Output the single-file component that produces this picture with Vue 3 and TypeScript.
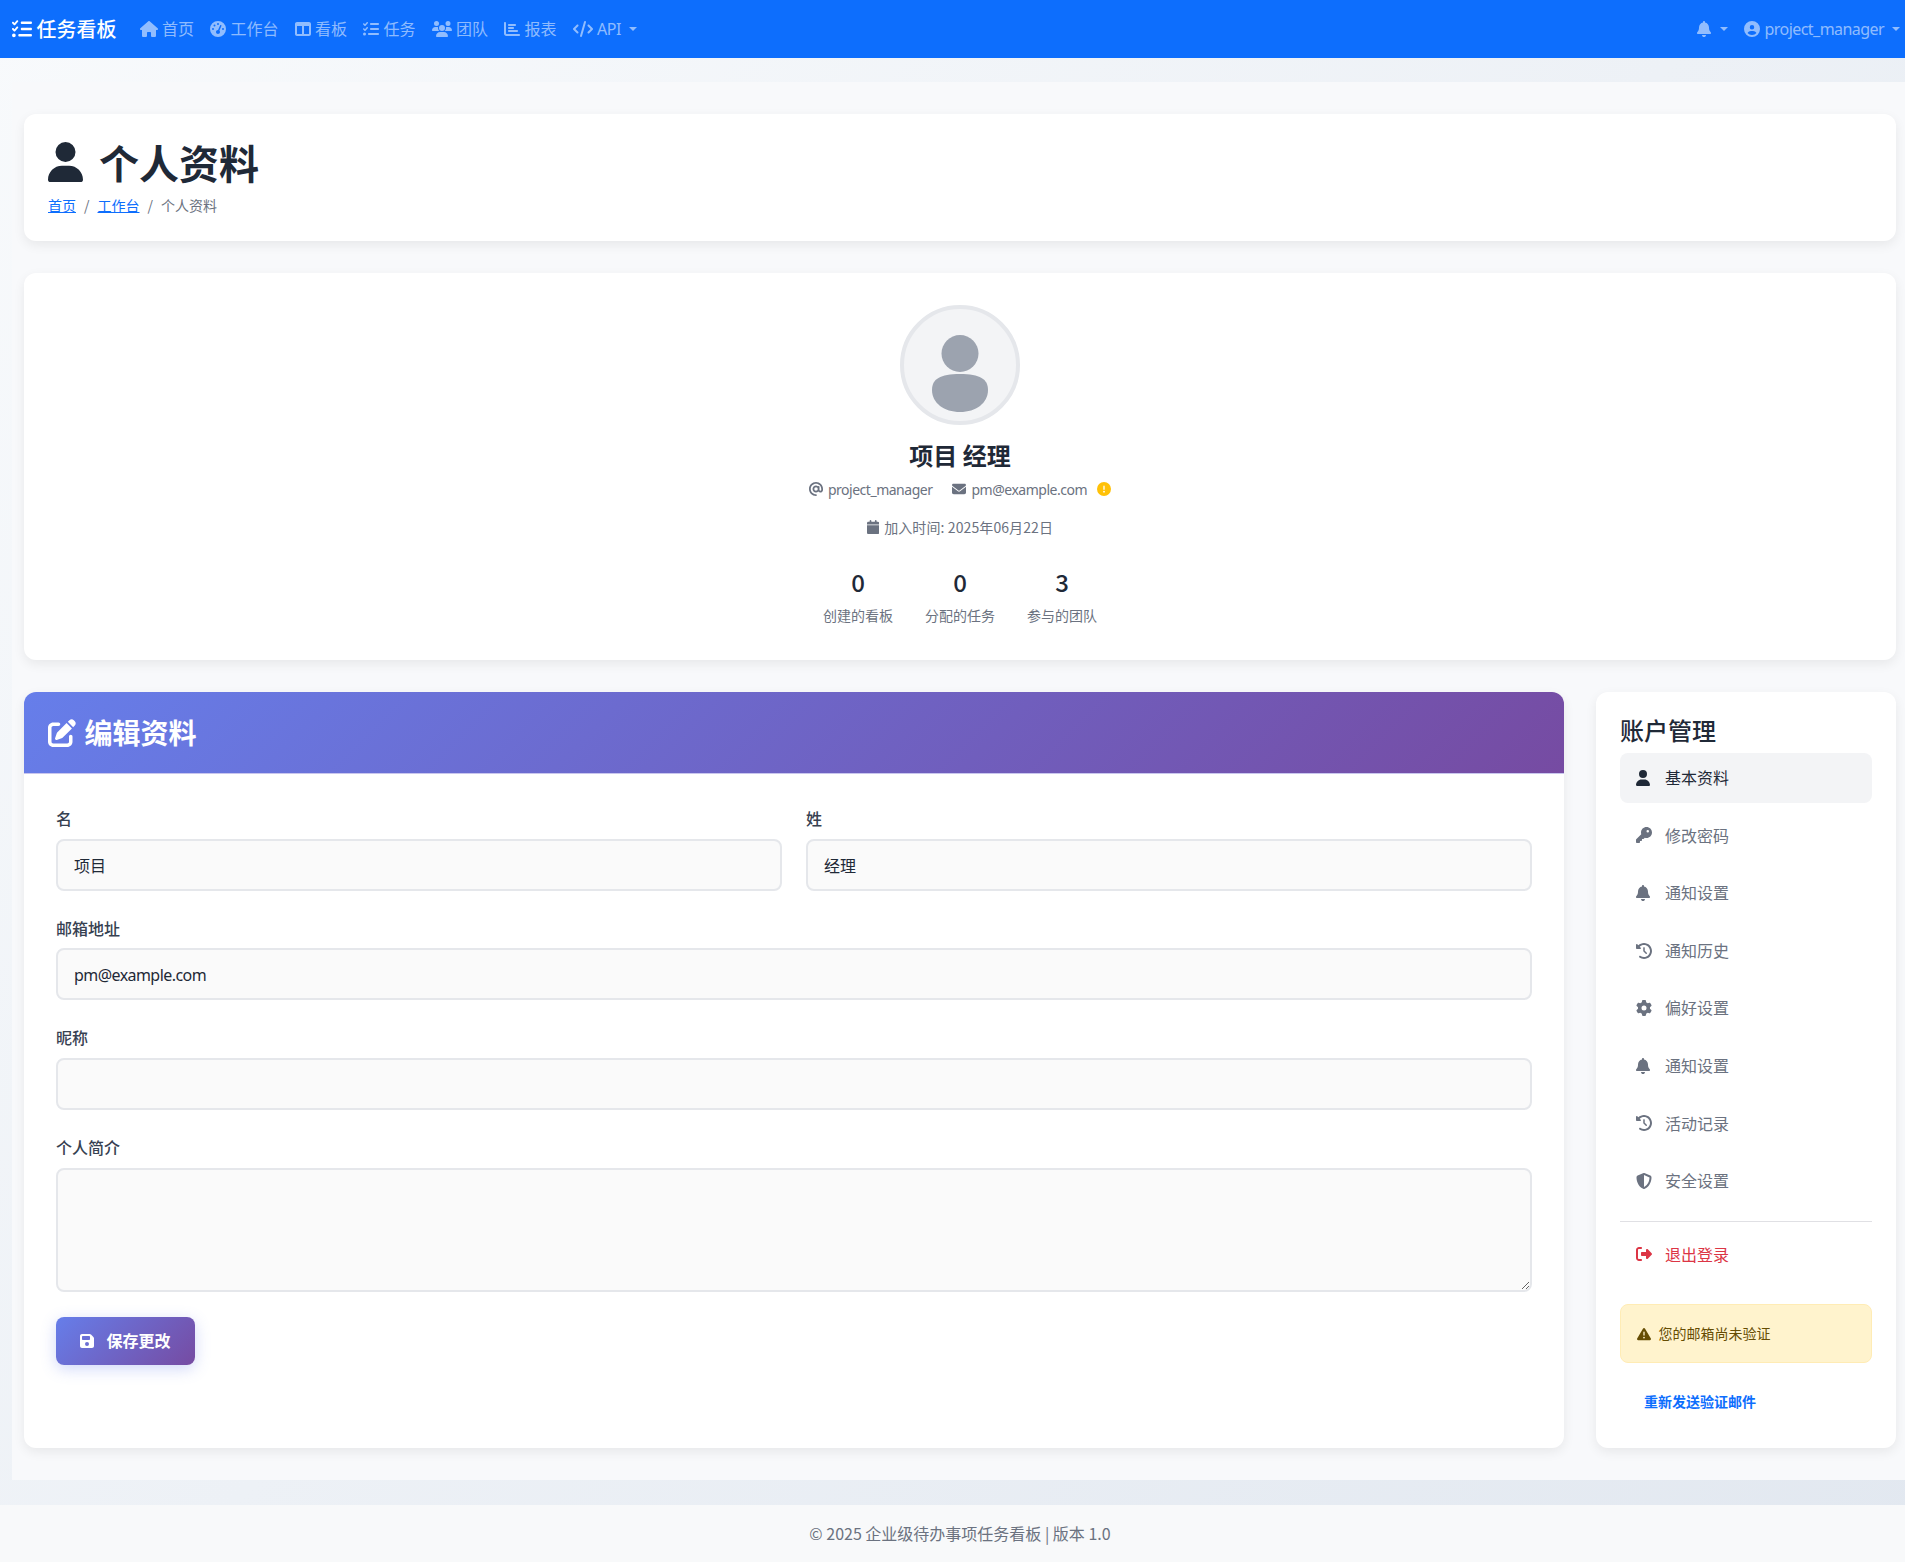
<script setup lang="ts">
import { h } from 'vue';

type IconDef = [number, string];

// font-awesome 6 solid paths, [viewBox width, path]
const icons: Record<string, IconDef> = {
  house: [576, 'M575.8 255.5c0 18-15 32.1-32 32.1h-32l.7 160.2c0 2.7-.2 5.4-.5 8.1V472c0 22.1-17.9 40-40 40H456c-1.1 0-2.2 0-3.3-.1c-1.4 .1-2.8 .1-4.2 .1H416 392c-22.1 0-40-17.9-40-40V448 384c0-17.7-14.3-32-32-32H256c-17.7 0-32 14.3-32 32v64 24c0 22.1-17.9 40-40 40H160 128.1c-1.5 0-3-.1-4.5-.2c-1.2 .1-2.4 .2-3.6 .2H104c-22.1 0-40-17.9-40-40V360c0-.9 0-1.9 .1-2.8V287.6H32c-18 0-32-14-32-32.1c0-9 3-17 10-24L266.4 8c7-7 15-8 22-8s15 2 21 7L564.8 231.5c8 7 12 15 11 24z'],
  gauge: [512, 'M0 256a256 256 0 1 1 512 0A256 256 0 1 1 0 256zM288 96a32 32 0 1 0 -64 0 32 32 0 1 0 64 0zM256 416c35.3 0 64-28.7 64-64c0-17.4-6.9-33.1-18.1-44.6L366 161.7c5.3-12.1-.2-26.3-12.3-31.6s-26.3 .2-31.6 12.3L257.9 288c-.6 0-1.3 0-1.9 0c-35.3 0-64 28.7-64 64s28.7 64 64 64zM176 144a32 32 0 1 0 -64 0 32 32 0 1 0 64 0zM96 288a32 32 0 1 0 0-64 32 32 0 1 0 0 64zm352-32a32 32 0 1 0 -64 0 32 32 0 1 0 64 0z'],
  columns: [512, 'M0 96C0 60.7 28.7 32 64 32H448c35.3 0 64 28.7 64 64V416c0 35.3-28.7 64-64 64H64c-35.3 0-64-28.7-64-64V96zm64 64V416H224V160H64zm384 0H288V416H448V160z'],
  tasks: [512, 'M152.1 38.2c9.9 8.9 10.7 24 1.8 33.9l-72 80c-4.4 4.9-10.6 7.8-17.2 7.9s-12.9-2.4-17.6-7L7 113C-2.3 103.6-2.3 88.4 7 79s24.6-9.4 33.9 0l22.1 22.1 55.1-61.2c8.9-9.9 24-10.7 33.9-1.8zm0 160c9.9 8.9 10.7 24 1.8 33.9l-72 80c-4.4 4.9-10.6 7.8-17.2 7.9s-12.9-2.4-17.6-7L7 273c-9.4-9.4-9.4-24.6 0-33.9s24.6-9.4 33.9 0l22.1 22.1 55.1-61.2c8.9-9.9 24-10.7 33.9-1.8zM224 96c0-17.7 14.3-32 32-32H480c17.7 0 32 14.3 32 32s-14.3 32-32 32H256c-17.7 0-32-14.3-32-32zm0 160c0-17.7 14.3-32 32-32H480c17.7 0 32 14.3 32 32s-14.3 32-32 32H256c-17.7 0-32-14.3-32-32zM160 416c0-17.7 14.3-32 32-32H480c17.7 0 32 14.3 32 32s-14.3 32-32 32H192c-17.7 0-32-14.3-32-32zM48 368a48 48 0 1 1 0 96 48 48 0 1 1 0-96z'],
  users: [640, 'M144 0a80 80 0 1 1 0 160A80 80 0 1 1 144 0zM512 0a80 80 0 1 1 0 160A80 80 0 1 1 512 0zM0 298.7C0 239.8 47.8 192 106.7 192h42.7c15.9 0 31 3.5 44.6 9.7c-1.3 7.2-1.9 14.7-1.9 22.3c0 38.2 16.8 72.5 43.3 96c-.2 0-.4 0-.7 0H21.3C9.6 320 0 310.4 0 298.7zM405.3 320c-.2 0-.4 0-.7 0c26.6-23.5 43.3-57.8 43.3-96c0-7.6-.7-15-1.9-22.3c13.6-6.3 28.7-9.7 44.6-9.7h42.7C592.2 192 640 239.8 640 298.7c0 11.8-9.6 21.3-21.3 21.3H405.3zM224 224a96 96 0 1 1 192 0 96 96 0 1 1 -192 0zM128 485.3C128 411.7 187.7 352 261.3 352H378.7C452.3 352 512 411.7 512 485.3c0 14.7-11.9 26.7-26.7 26.7H154.7c-14.7 0-26.7-11.9-26.7-26.7z'],
  chart: [512, 'M32 32c17.7 0 32 14.3 32 32V400c0 8.8 7.2 16 16 16H480c17.7 0 32 14.3 32 32s-14.3 32-32 32H80c-44.2 0-80-35.8-80-80V64C0 46.3 14.3 32 32 32zm96 96c0-17.7 14.3-32 32-32l192 0c17.7 0 32 14.3 32 32s-14.3 32-32 32l-192 0c-17.7 0-32-14.3-32-32zm32 64H288c17.7 0 32 14.3 32 32s-14.3 32-32 32H160c-17.7 0-32-14.3-32-32s14.3-32 32-32zm0 96H416c17.7 0 32 14.3 32 32s-14.3 32-32 32H160c-17.7 0-32-14.3-32-32s14.3-32 32-32z'],
  code: [640, 'M392.8 1.2c-17-4.9-34.7 5-39.6 22l-128 448c-4.9 17 5 34.7 22 39.6s34.7-5 39.6-22l128-448c4.9-17-5-34.7-22-39.6zm80.6 120.1c-12.5 12.5-12.5 32.8 0 45.3L562.7 256l-89.4 89.4c-12.5 12.5-12.5 32.8 0 45.3s32.8 12.5 45.3 0l112-112c12.5-12.5 12.5-32.8 0-45.3l-112-112c-12.5-12.5-32.8-12.5-45.3 0zm-306.7 0c-12.5-12.5-32.8-12.5-45.3 0l-112 112c-12.5 12.5-12.5 32.8 0 45.3l112 112c12.5 12.5 32.8 12.5 45.3 0s12.5-32.8 0-45.3L77.3 256l89.4-89.4c12.5-12.5 12.5-32.8 0-45.3z'],
  bell: [448, 'M224 0c-17.7 0-32 14.3-32 32V51.2C119 66 64 130.6 64 208v18.8c0 47-17.3 92.4-48.5 127.6l-7.4 8.3c-8.4 9.4-10.4 22.9-5.3 34.4S19.4 416 32 416H416c12.6 0 24-7.4 29.2-18.9s3.1-25-5.3-34.4l-7.4-8.3C401.3 319.2 384 273.9 384 226.8V208c0-77.4-55-142-128-156.8V32c0-17.7-14.3-32-32-32zm45.3 493.3c12-12 18.7-28.3 18.7-45.3H224 160c0 17 6.7 33.3 18.7 45.3s28.3 18.7 45.3 18.7s33.3-6.7 45.3-18.7z'],
  circleUser: [512, 'M399 384.2C376.9 345.8 335.4 320 288 320H224c-47.4 0-88.9 25.8-111 64.2c35.2 39.2 86.2 63.8 143 63.8s107.8-24.7 143-63.8zM0 256a256 256 0 1 1 512 0A256 256 0 1 1 0 256zm256 16a72 72 0 1 0 0-144 72 72 0 1 0 0 144z'],
  user: [448, 'M224 256A128 128 0 1 0 224 0a128 128 0 1 0 0 256zm-45.7 48C79.8 304 0 383.8 0 482.3C0 498.7 13.3 512 29.7 512H418.3c16.4 0 29.7-13.3 29.7-29.7C448 383.8 368.2 304 269.7 304H178.3z'],
  at: [512, 'M256 64C150 64 64 150 64 256s86 192 192 192c17.7 0 32 14.3 32 32s-14.3 32-32 32C114.6 512 0 397.4 0 256S114.6 0 256 0S512 114.6 512 256v32c0 53-43 96-96 96c-29.3 0-55.6-13.2-73.2-33.9C320 371.1 289.5 384 256 384c-70.7 0-128-57.3-128-128s57.3-128 128-128c27.9 0 53.7 8.9 74.7 24.1c5.7-5 13.1-8.1 21.3-8.1c17.7 0 32 14.3 32 32v80 32c0 17.7 14.3 32 32 32s32-14.3 32-32V256c0-106-86-192-192-192zm64 192a64 64 0 1 0 -128 0 64 64 0 1 0 128 0z'],
  envelope: [512, 'M48 64C21.5 64 0 85.5 0 112c0 15.1 7.1 29.3 19.2 38.4L236.8 313.6c11.4 8.5 27 8.5 38.4 0L492.8 150.4c12.1-9.1 19.2-23.3 19.2-38.4c0-26.5-21.5-48-48-48H48zM0 176V384c0 35.3 28.7 64 64 64H448c35.3 0 64-28.7 64-64V176L294.4 339.2c-22.8 17.1-54 17.1-76.8 0L0 176z'],
  circleExcl: [512, 'M256 512A256 256 0 1 0 256 0a256 256 0 1 0 0 512zm0-384c13.3 0 24 10.7 24 24V264c0 13.3-10.7 24-24 24s-24-10.7-24-24V152c0-13.3 10.7-24 24-24zM224 352a32 32 0 1 1 64 0 32 32 0 1 1 -64 0z'],
  calendar: [448, 'M96 32V64H48C21.5 64 0 85.5 0 112v48H448V112c0-26.5-21.5-48-48-48H352V32c0-17.7-14.3-32-32-32s-32 14.3-32 32V64H160V32c0-17.7-14.3-32-32-32S96 14.3 96 32zM448 192H0V464c0 26.5 21.5 48 48 48H400c26.5 0 48-21.5 48-48V192z'],
  edit: [512, 'M471.6 21.7c-21.9-21.9-57.3-21.9-79.2 0L362.3 51.7l97.9 97.9 30.1-30.1c21.9-21.9 21.9-57.3 0-79.2L471.6 21.7zm-299.2 220c-6.1 6.1-10.8 13.6-13.5 21.9l-29.6 88.8c-2.9 8.6-.6 18.1 5.8 24.6s15.9 8.7 24.6 5.8l88.8-29.6c8.2-2.7 15.7-7.4 21.9-13.5L437.7 172.3 339.7 74.3 172.4 241.7zM96 64C43 64 0 107 0 160V416c0 53 43 96 96 96H352c53 0 96-43 96-96V320c0-17.7-14.3-32-32-32s-32 14.3-32 32v96c0 17.7-14.3 32-32 32H96c-17.7 0-32-14.3-32-32V160c0-17.7 14.3-32 32-32h96c17.7 0 32-14.3 32-32s-14.3-32-32-32H96z'],
  save: [448, 'M64 32C28.7 32 0 60.7 0 96V416c0 35.3 28.7 64 64 64H384c35.3 0 64-28.7 64-64V173.3c0-17-6.7-33.3-18.7-45.3L352 50.7C340 38.7 323.7 32 306.7 32H64zm0 96c0-17.7 14.3-32 32-32H288c17.7 0 32 14.3 32 32v64c0 17.7-14.3 32-32 32H96c-17.7 0-32-14.3-32-32V128zM224 288a64 64 0 1 1 0 128 64 64 0 1 1 0-128z'],
  key: [512, 'M336 352c97.2 0 176-78.8 176-176S433.2 0 336 0S160 78.8 160 176c0 18.7 2.9 36.8 8.3 53.7L7 391c-4.5 4.5-7 10.6-7 17v80c0 13.3 10.7 24 24 24h80c13.3 0 24-10.7 24-24V448h40c13.3 0 24-10.7 24-24V384h40c6.4 0 12.5-2.5 17-7l33.3-33.3c16.9 5.4 35 8.3 53.7 8.3zM376 96a40 40 0 1 1 0 80 40 40 0 1 1 0-80z'],
  history: [512, 'M75 75L41 41C25.9 25.9 0 36.6 0 57.9V168c0 13.3 10.7 24 24 24H134.1c21.4 0 32.1-25.9 17-41l-30.8-30.8C155 85.5 203 64 256 64c106 0 192 86 192 192s-86 192-192 192c-40.8 0-78.6-12.7-109.7-34.4c-14.5-10.1-34.4-6.6-44.6 7.9s-6.6 34.4 7.9 44.6C151.2 495 201.7 512 256 512c141.4 0 256-114.6 256-256S397.4 0 256 0C185.3 0 121.3 28.7 75 75zm181 53c-13.3 0-24 10.7-24 24V256c0 6.4 2.5 12.5 7 17l72 72c9.4 9.4 24.6 9.4 33.9 0s9.4-24.6 0-33.9l-65-65V152c0-13.3-10.7-24-24-24z'],
  gear: [512, 'M495.9 166.6c3.2 8.7 .5 18.4-6.4 24.6l-43.3 39.4c1.1 8.3 1.7 16.8 1.7 25.4s-.6 17.1-1.7 25.4l43.3 39.4c6.9 6.2 9.6 15.9 6.4 24.6c-4.4 11.9-9.7 23.3-15.8 34.3l-4.7 8.1c-6.6 11-14 21.4-22.1 31.2c-5.9 7.2-15.7 9.6-24.5 6.8l-55.7-17.7c-13.4 10.3-28.2 18.9-44 25.4l-12.5 57.1c-2 9.1-9 16.3-18.2 17.8c-13.8 2.3-28 3.5-42.5 3.5s-28.7-1.2-42.5-3.5c-9.2-1.5-16.2-8.7-18.2-17.8l-12.5-57.1c-15.8-6.5-30.6-15.1-44-25.4L83.1 425.9c-8.8 2.8-18.6 .3-24.5-6.8c-8.1-9.8-15.5-20.2-22.1-31.2l-4.7-8.1c-6.1-11-11.4-22.4-15.8-34.3c-3.2-8.7-.5-18.4 6.4-24.6l43.3-39.4C64.6 273.1 64 264.6 64 256s.6-17.1 1.7-25.4L22.4 191.2c-6.9-6.2-9.6-15.9-6.4-24.6c4.4-11.9 9.7-23.3 15.8-34.3l4.7-8.1c6.6-11 14-21.4 22.1-31.2c5.9-7.2 15.7-9.6 24.5-6.8l55.7 17.7c13.4-10.3 28.2-18.9 44-25.4l12.5-57.1c2-9.1 9-16.3 18.2-17.8C227.3 1.2 241.5 0 256 0s28.7 1.2 42.5 3.5c9.2 1.5 16.2 8.7 18.2 17.8l12.5 57.1c15.8 6.5 30.6 15.1 44 25.4l55.7-17.7c8.8-2.8 18.6-.3 24.5 6.8c8.1 9.8 15.5 20.2 22.1 31.2l4.7 8.1c6.1 11 11.4 22.4 15.8 34.3zM256 336a80 80 0 1 0 0-160 80 80 0 1 0 0 160z'],
  shield: [512, 'M256 0c4.6 0 9.2 1 13.4 2.9L457.7 82.8c22 9.3 38.4 31 38.3 57.2c-.5 99.2-41.3 280.7-213.6 363.2c-16.7 8-36.1 8-52.8 0C57.3 420.7 16.5 239.2 16 140c-.1-26.2 16.3-47.9 38.3-57.2L242.7 2.9C246.8 1 251.4 0 256 0zm0 66.8V444.8C394 378 431.1 230.1 432 141.4L256 66.8l0 0z'],
  signOut: [512, 'M377.9 105.9L500.7 228.7c7.2 7.2 11.3 17.1 11.3 27.3s-4.1 20.1-11.3 27.3L377.9 406.1c-6.4 6.4-15 9.9-24 9.9c-18.7 0-33.9-15.2-33.9-33.9l0-62.1-128 0c-17.7 0-32-14.3-32-32l0-64c0-17.7 14.3-32 32-32l128 0 0-62.1c0-18.7 15.2-33.9 33.9-33.9c9 0 17.6 3.6 24 9.9zM160 96L96 96c-17.7 0-32 14.3-32 32l0 256c0 17.7 14.3 32 32 32l64 0c17.7 0 32 14.3 32 32s-14.3 32-32 32l-64 0c-53 0-96-43-96-96L0 128C0 75 43 32 96 32l64 0c17.7 0 32 14.3 32 32s-14.3 32-32 32z'],
  warning: [512, 'M256 32c14.2 0 27.3 7.5 34.5 19.8l216 368c7.3 12.4 7.3 27.7 .2 40.1S486.3 480 472 480H40c-14.3 0-27.6-7.7-34.7-20.1s-7-27.8 .2-40.1l216-368C228.7 39.5 241.8 32 256 32zm0 128c-13.3 0-24 10.7-24 24V296c0 13.3 10.7 24 24 24s24-10.7 24-24V184c0-13.3-10.7-24-24-24zm32 224a32 32 0 1 0 -64 0 32 32 0 1 0 64 0z'],
};

// small svg icon, width follows the viewBox like the icon font does
const Fa = (props: { name: string; size: number }) => {
  const [w, d] = icons[props.name];
  return h(
    'svg',
    {
      viewBox: `0 0 ${w} 512`,
      width: (props.size * w) / 512,
      height: props.size,
      fill: 'currentColor',
      style: 'flex:none;display:block',
    },
    [h('path', { d })],
  );
};
Fa.props = ['name', 'size'];

const navLinks = [
  { icon: 'house', label: '首页' },
  { icon: 'gauge', label: '工作台' },
  { icon: 'columns', label: '看板' },
  { icon: 'tasks', label: '任务' },
  { icon: 'users', label: '团队' },
  { icon: 'chart', label: '报表' },
];

const stats = [
  { value: 0, label: '创建的看板' },
  { value: 0, label: '分配的任务' },
  { value: 3, label: '参与的团队' },
];

const menu = [
  { icon: 'user', label: '基本资料', active: true },
  { icon: 'key', label: '修改密码' },
  { icon: 'bell', label: '通知设置' },
  { icon: 'history', label: '通知历史' },
  { icon: 'gear', label: '偏好设置' },
  { icon: 'bell', label: '通知设置' },
  { icon: 'history', label: '活动记录' },
  { icon: 'shield', label: '安全设置' },
];
</script>

<template>
  <div class="app">
    <nav class="navbar">
      <a class="brand"><Fa name="tasks" :size="20" />任务看板</a>
      <a v-for="link in navLinks" :key="link.label" class="nav-link">
        <Fa :name="link.icon" :size="16" />{{ link.label }}
      </a>
      <a class="nav-link"><Fa name="code" :size="16" /><span class="lat">API</span><i class="caret"></i></a>
      <div class="nav-right">
        <a class="nav-link"><Fa name="bell" :size="16" /><i class="caret bell-caret"></i></a>
        <a class="nav-link last"><Fa name="circleUser" :size="16" /><span class="lat">project_manager</span><i class="caret"></i></a>
      </div>
    </nav>

    <main class="content">
      <section class="card page-head">
        <h1><Fa name="user" :size="40" />个人资料</h1>
        <div class="crumbs">
          <a>首页</a><span class="sep">/</span><a>工作台</a><span class="sep">/</span><span>个人资料</span>
        </div>
      </section>

      <section class="card profile">
        <div class="avatar">
          <svg width="112" height="112" viewBox="0 0 112 112" fill="#9ca3af">
            <circle cx="56" cy="44.5" r="18.5" />
            <path d="M56 65C76 65 84 70 84 81C84 94 72 103 56 103C40 103 28 94 28 81C28 70 36 65 56 65Z" />
          </svg>
        </div>
        <h2>项目 经理</h2>
        <div class="meta">
          <span class="meta-item"><Fa name="at" :size="14" /><span class="lat">project_manager</span></span>
          <span class="meta-item"><Fa name="envelope" :size="14" /><span class="lat">pm@example.com</span><span class="unverified"><Fa name="circleExcl" :size="14" /></span></span>
        </div>
        <div class="meta joined">
          <span class="meta-item"><Fa name="calendar" :size="14" />加入时间: 2025年06月22日</span>
        </div>
        <div class="stats">
          <div v-for="s in stats" :key="s.label" class="stat">
            <div class="stat-value">{{ s.value }}</div>
            <div class="stat-label">{{ s.label }}</div>
          </div>
        </div>
      </section>

      <div class="columns">
        <section class="card edit">
          <header class="edit-head">
            <h3><Fa name="edit" :size="28" />编辑资料</h3>
          </header>
          <form class="edit-body" @submit.prevent>
            <div class="two">
              <div class="field">
                <label>名</label>
                <input type="text" value="项目" />
              </div>
              <div class="field">
                <label>姓</label>
                <input type="text" value="经理" />
              </div>
            </div>
            <div class="field">
              <label>邮箱地址</label>
              <input class="lat-input" type="email" value="pm@example.com" />
            </div>
            <div class="field">
              <label>昵称</label>
              <input type="text" />
            </div>
            <div class="field">
              <label>个人简介</label>
              <textarea rows="4"></textarea>
            </div>
            <button class="save" type="submit"><Fa name="save" :size="16" />保存更改</button>
          </form>
        </section>

        <aside class="card side">
          <h4>账户管理</h4>
          <a v-for="(m, i) in menu" :key="i" class="menu-item" :class="{ active: m.active }">
            <span class="menu-icon"><Fa :name="m.icon" :size="16" /></span>{{ m.label }}
          </a>
          <hr />
          <a class="menu-item danger"><span class="menu-icon"><Fa name="signOut" :size="16" /></span>退出登录</a>
          <div class="alert">
            <Fa name="warning" :size="14" /><span>您的邮箱尚未验证</span>
          </div>
          <a class="resend">重新发送验证邮件</a>
        </aside>
      </div>
    </main>

    <footer class="footer">© 2025 企业级待办事项任务看板 | 版本 1.0</footer>
  </div>
</template>

<style>
html,
body {
  margin: 0;
}
body {
  background: linear-gradient(135deg, #f8fafc 0%, #e2e8f0 100%);
}
</style>

<style scoped>
.app {
  font-family: "Noto Sans CJK SC", sans-serif;
  font-size: 16px;
  line-height: 1.6;
  color: #1f2937;
}
/* latin runs in the reference are rounder and a bit tighter than the cjk font's latin */
.lat {
  font-family: "Noto Sans", sans-serif;
  letter-spacing: -0.035em;
  padding-top: 2px;
}

.navbar {
  display: flex;
  align-items: center;
  height: 58px;
  padding: 0 5px 0 12px;
  background: #0d6efd;
  box-sizing: border-box;
}
.brand {
  display: flex;
  align-items: center;
  gap: 4.5px;
  margin-right: 15px;
  color: #fff;
  font-size: 20px;
  font-weight: 500;
}
.nav-link {
  display: flex;
  align-items: center;
  gap: 4.5px;
  padding: 8px;
  color: rgba(255, 255, 255, 0.55);
}
.nav-link.last {
  padding-right: 0;
}
.nav-right {
  display: flex;
  margin-left: auto;
}
.caret {
  width: 0;
  height: 0;
  margin-left: 3.5px;
  border-top: 4.8px solid currentColor;
  border-left: 4.8px solid transparent;
  border-right: 4.8px solid transparent;
}
.bell-caret {
  margin-left: 4.5px;
}

.content {
  margin: 24px 0 25px 12px;
  padding: 32px 9px 32.5px 12px;
  background: #f8f9fb;
}
.card {
  background: #fff;
  border-radius: 12px;
  box-shadow: 0 4px 12px rgba(0, 0, 0, 0.07);
}

.page-head {
  padding: 24px 24px 24.6px;
  margin-bottom: 32px;
}
.page-head h1 {
  display: flex;
  align-items: center;
  gap: 16px;
  margin: 0 0 8px;
  font-size: 40px;
  font-weight: 700;
  line-height: 1.2;
}
.crumbs {
  font-size: 14px;
  color: #6b7280;
}
.crumbs a {
  color: #0d6efd;
  text-decoration: underline;
}
.sep {
  padding: 0 8px;
}

.profile {
  display: flex;
  flex-direction: column;
  align-items: center;
  padding: 32px 32px 33.4px;
  margin-bottom: 32px;
}
.avatar {
  width: 120px;
  height: 120px;
  box-sizing: border-box;
  border: 4px solid #e5e7eb;
  border-radius: 50%;
  background: #f3f4f6;
  margin-bottom: 16px;
}
.avatar svg {
  display: block;
}
.profile h2 {
  margin: 0 0 8px;
  font-size: 24px;
  font-weight: 700;
  line-height: 1.2;
}
.meta {
  display: flex;
  gap: 20px;
  height: 22.4px;
  font-size: 14px;
  color: #6b7280;
}
.joined {
  margin-top: 16px;
  letter-spacing: 0.1px;
}
.meta-item {
  display: flex;
  align-items: center;
  gap: 5px;
}
.unverified {
  margin-left: 5px;
  color: #ffc107;
}
.stats {
  display: flex;
  gap: 32px;
  margin-top: 29px;
}
.stat {
  text-align: center;
}
.stat-value {
  font-size: 24px;
  font-weight: 500;
  line-height: 1.2;
  margin-bottom: 8px;
}
.stat-label {
  font-size: 14px;
  color: #6b7280;
}

.columns {
  display: flex;
  gap: 32px;
}

.edit {
  flex: 1;
  min-width: 0;
  overflow: hidden;
}
.edit-head {
  display: flex;
  align-items: center;
  height: 82px;
  box-sizing: border-box;
  padding: 0 24px;
  background: linear-gradient(135deg, #667eea 0%, #764ba2 100%);
  border-bottom: 1px solid #c9c6ee;
  color: #fff;
}
.edit-head h3 {
  display: flex;
  align-items: center;
  gap: 8.5px;
  margin: 0;
  font-size: 28px;
  font-weight: 700;
  line-height: 1.2;
}
.edit-body {
  padding: 32px;
}
.two {
  display: grid;
  grid-template-columns: 1fr 1fr;
  gap: 24px;
}
.field {
  margin-bottom: 25px;
}
.field label {
  display: block;
  margin-bottom: 7px;
  font-weight: 500;
  color: #374151;
}
.field input,
.field textarea {
  display: block;
  width: 100%;
  box-sizing: border-box;
  padding: 12px 16px;
  border: 2px solid #e5e7eb;
  border-radius: 8px;
  background: #fafafa;
  color: #1f2937;
  font: inherit;
  line-height: 24px;
}
.field .lat-input {
  font-family: "Noto Sans", sans-serif;
  letter-spacing: -0.035em;
  padding: 13px 16px 11px;
}
.save {
  display: inline-flex;
  align-items: center;
  gap: 12.5px;
  height: 48px;
  padding: 0 24px;
  border: none;
  border-radius: 8px;
  background: linear-gradient(135deg, #667eea 0%, #764ba2 100%);
  box-shadow: 0 4px 15px rgba(102, 126, 234, 0.3);
  color: #fff;
  font: inherit;
  font-weight: 600;
}

.side {
  width: 300px;
  flex: none;
  box-sizing: border-box;
  padding: 24px;
}
.side h4 {
  margin: 0 0 8px;
  font-size: 24px;
  font-weight: 500;
  line-height: 1.2;
}
.menu-item {
  display: flex;
  align-items: center;
  padding: 12px 16px;
  margin-bottom: 8px;
  border-radius: 8px;
  color: #6b7280;
}
.menu-item.active {
  background: #f3f4f6;
  color: #1f2937;
}
.menu-item.danger {
  color: #dc3545;
}
.menu-icon {
  width: 16px;
  margin-right: 13px;
}
.side hr {
  margin: 15px 0 8px;
  border: none;
  border-top: 1px solid #e0e0e4;
}
.alert {
  display: flex;
  align-items: center;
  gap: 7.5px;
  margin-top: 25px;
  padding: 16px;
  border: 1px solid #ffecb5;
  border-radius: 8px;
  background: #fff3cd;
  color: #664d03;
  font-size: 14px;
  height: 58.5px;
  box-sizing: border-box;
}
.resend {
  display: block;
  margin: 27.5px 0 11px;
  padding-left: 24px;
  font-size: 14px;
  font-weight: 700;
  color: #0d6efd;
}

.footer {
  height: 56.7px;
  box-sizing: border-box;
  padding: 16px 16px 16px 31px;
  line-height: 25px;
  text-align: center;
  background: #f8f9fa;
  color: #6b7280;
}
</style>
